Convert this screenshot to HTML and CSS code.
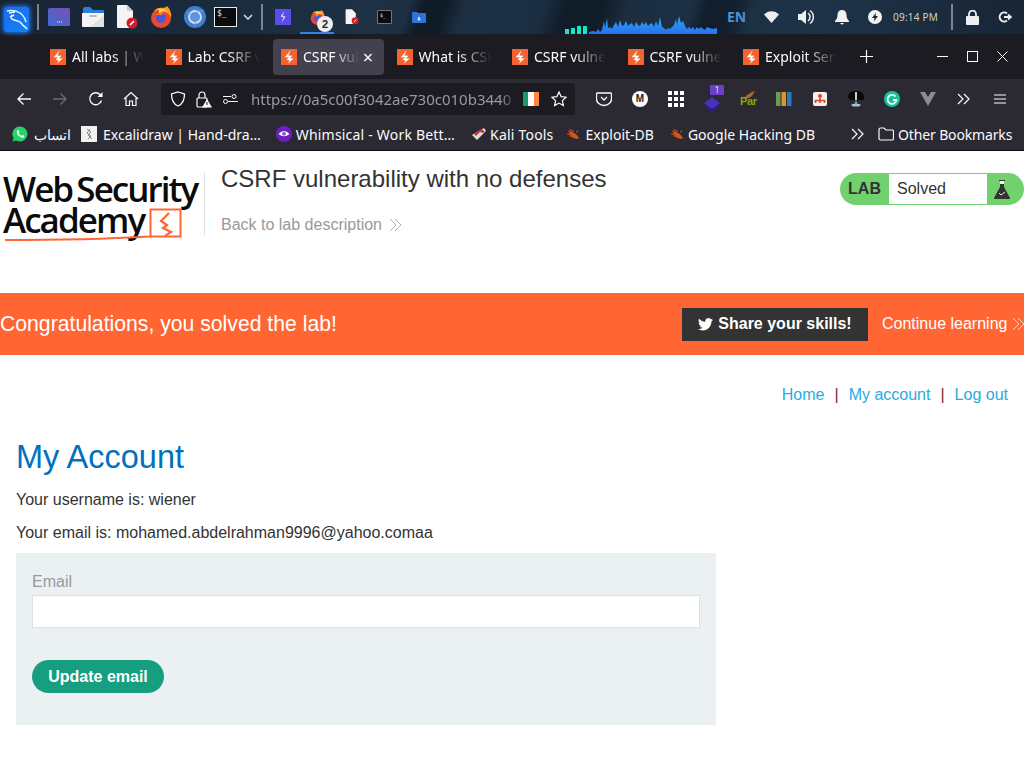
FILE: index.html
```html
<!DOCTYPE html>
<html lang="en">
<head>
<meta charset="utf-8">
<title>CSRF vulnerability with no defenses</title>
<link rel="stylesheet" href="styles.css">
</head>
<body>
<svg class="defs" width="0" height="0" aria-hidden="true">
  <symbol id="bolt" viewBox="0 0 16 16"><rect width="16" height="16" fill="#f4622f"/><path d="M9.800 1 3.800 8.200 8 8.600 5.600 10.800 8.600 11.400 6.600 15 12.600 9.600 8.800 9.200 11.600 6.800 7.400 6.400z" fill="#fff"/></symbol>
  <symbol id="bug" viewBox="0 0 16 16"><path d="M3 4l3 2 5 2 3 4-1 1-5-1-3-3z" fill="#d4541c"/><path d="M2 8l4 1M5 11l2-2M8 4l0 3M11 6l2-1M5 3l2 3" stroke="#d4541c" fill="none"/></symbol>
  <symbol id="fox" viewBox="0 0 22 22"><circle cx="11" cy="12" r="10" fill="#e8492f"/><path d="M4 5c2-3 6-4 9-3 1-1 3 0 4-2 3 3 5 8 4 12-1-3-3-5-5-6-3-2-8-2-12-1z" fill="#ff9b25"/><path d="M9 3c3-1 7 0 9 4-2-1-4-2-6-1-1 1-3 1-3 1z" fill="#ffd13b"/><circle cx="11" cy="12" r="5" fill="#4f56d8"/><path d="M6 9c2-2 5-3 8-2l-3 2z" fill="#ff7a1f"/></symbol>
</svg>

<div class="panel">
  <div class="panel-left">
    <div class="kali"><svg width="26" height="26" viewBox="0 0 26 26"><path d="M3 4c6-1 10 0 13 2 3 2 5 5 6 9M8 8c-2 2-1 4 2 5 3 1 6 1 8 4 1 2 3 2 5 5M5 6l6-1M6 10l4-2" fill="none" stroke="#eaf5ff" stroke-width="1.500"/></svg></div>
    <i class="sep"></i>
    <svg class="ic-a" width="22" height="18" viewBox="0 0 22 18"><defs><linearGradient id="lav" x1="0" y1="1" x2="1" y2="0"><stop offset="0" stop-color="#3f6ad6"/><stop offset="1" stop-color="#7a4fb0"/></linearGradient></defs><rect width="22" height="18" rx="1.500" fill="url(#lav)"/><path d="M9 13.500h1v1H9zM11 13.500h1v1h-1zM13 13.500h1v1h-1z" fill="#fff"/></svg>
    <svg class="ic-b" width="22" height="20" viewBox="0 0 22 20"><path d="M1 2q0-2 2-2h5l3 3h10q1 0 1 1v3H1z" fill="#2d7fd8"/><path d="M0 6h22v13q0 1-1 1H1q-1 0-1-1z" fill="#f4f4f4"/><path d="M22 8v11q0 1-1 1H8z" fill="#e2e2e2"/><rect x="7" y="8" width="8" height="2" rx="1" fill="#bbb"/></svg>
    <svg class="ic-c" width="22" height="24" viewBox="0 0 22 24"><path d="M1 1q0-1 1-1h9l6 6v16q0 1-1 1H2q-1 0-1-1z" fill="#f4f4f4"/><path d="M11 0l6 6h-6z" fill="#ccc"/><circle cx="16" cy="18" r="5.500" fill="#d01f2a"/><path d="M14 20l4-4" stroke="#fff" stroke-width="1.600"/></svg>
    <svg class="ic-d" width="22" height="22"><use href="#fox"/></svg>
    <svg class="ic-e" width="22" height="22" viewBox="0 0 22 22"><circle cx="11" cy="11" r="11" fill="#3f7fd0"/><circle cx="11" cy="11" r="6" fill="#5d93d8" stroke="#cfe0f4" stroke-width="1.800"/><path d="M3 6l5 3M12 5h8M10 20l3-6" stroke="#6fa3e0" stroke-width="1"/></svg>
    <div class="term"><span>$_</span></div>
    <svg class="ic-f" width="10" height="6" viewBox="0 0 10 6"><path d="M1 1l4 4 4-4" fill="none" stroke="#ddd" stroke-width="1.500"/></svg>
    <i class="sep sep-2"></i>
    <svg class="burp" width="16" height="16" viewBox="0 0 16 16"><rect width="16" height="16" fill="#5b4be8"/><path d="M9.500 2 5.500 7.500 8.500 8 6.500 14 10.500 7.500 7.500 7z" fill="#dfe6ff"/></svg>
    <div class="ff-wrap">
      <svg width="15" height="15"><use href="#fox"/></svg>
      <b class="count">2</b>
    </div>
    <svg class="ic-g" width="14" height="16" viewBox="0 0 22 24"><path d="M1 1q0-1 1-1h9l6 6v16q0 1-1 1H2q-1 0-1-1z" fill="#f4f4f4"/><circle cx="16" cy="18" r="5.500" fill="#d01f2a"/><path d="M14 20l4-4" stroke="#fff" stroke-width="1.500"/></svg>
    <div class="term term-small"><span>$_</span></div>
    <svg class="ic-h" width="14" height="11" viewBox="0 0 14 11"><path d="M0 1q0-1 1-1h4l1 1h7q1 0 1 1v8q0 1-1 1H1q-1 0-1-1z" fill="#2d74d8"/><path d="M6 5h2v2h1L7 9 5 7h1z" fill="#cfe0fa"/></svg>
  </div>
  <div class="panel-right">
    <div class="graph"><span class="bars"><i></i><i></i><i></i><i></i></span><svg width="128" height="18" viewBox="0 0 128 18"><defs><linearGradient id="g" x1="0" y1="0" x2="0" y2="1"><stop offset="0" stop-color="#27b0ef"/><stop offset="1" stop-color="#2a6ff0"/></linearGradient></defs><path d="M0 18V16L4 15 7 16 9 13 11 16 13 14 15 5 16 12 18 2 19 12 21 11 23 13 25 9 27 6 29 11 31 4 33 10 35 9 37 5 39 10 41 8 43 7 45 11 47 6 49 9 51 10 53 6 55 9 57 6 59 10 61 8 63 7 65 11 67 5 69 10 71 1 73 11 75 12 77 14 79 12 81 13 83 11 85 9 87 3 88 9 90 0 92 7 94 5 96 10 98 13 100 11 102 13 104 11 106 14 108 11 110 13 112 11 114 13 116 14 118 11 120 12 124 13 128 12V18z" fill="url(#g)"/></svg></div>
    <span class="lang">EN</span>
    <svg class="wifi" width="15" height="12" viewBox="0 0 15 12"><path d="M0 3.500C4-1 11-1 15 3.500L7.500 12z" fill="#eee"/></svg>
    <svg class="vol" width="17" height="16" viewBox="0 0 17 16"><path d="M0 5h3l5-4v14l-5-4H0z" fill="#eee"/><path d="M10 4a5 5 0 0 1 0 8M12 1.500a8 8 0 0 1 0 13" fill="none" stroke="#eee" stroke-width="1.500"/></svg>
    <svg class="bell" width="14" height="15" viewBox="0 0 14 15"><path d="M7 0c3 0 4.500 2 4.500 5 0 3 1 4.500 2.500 6v1H0v-1c1.500-1.500 2.500-3 2.500-6C2.500 2 4 0 7 0z" fill="#f2f2f2"/><path d="M5 13h4q-2 3-4 0z" fill="#f2f2f2"/></svg>
    <svg class="boltc" width="14" height="14" viewBox="0 0 14 14"><circle cx="7" cy="7" r="7" fill="#f2f2f2"/><path d="M8 2.500 4 8h2.500L6 11.500 10 6H7.500z" fill="#1b2838"/></svg>
    <span class="clock">09:14 PM</span>
    <i class="sep sep-3"></i>
    <svg class="lock" width="13" height="15" viewBox="0 0 13 15"><rect y="6" width="13" height="9" rx="1" fill="#eee"/><path d="M3 6.500V4a3.500 3.500 0 0 1 7 0v2.500" fill="none" stroke="#eee" stroke-width="1.800"/></svg>
    <svg class="power" width="14" height="12" viewBox="0 0 14 12"><path d="M9 2.500A4.500 4.500 0 1 0 9 9.500" fill="none" stroke="#eee" stroke-width="2"/><path d="M6 6h6M10 3.500 13 6l-3 2.500" fill="none" stroke="#eee" stroke-width="1.800"/></svg>
  </div>
</div>

<div class="tabs">
  <div class="tab"><svg class="fav"><use href="#bolt"/></svg><span class="tab-t">All labs | Web Security</span></div>
  <div class="tab"><svg class="fav"><use href="#bolt"/></svg><span class="tab-t">Lab: CSRF vuln</span></div>
  <div class="tab active"><svg class="fav"><use href="#bolt"/></svg><span class="tab-t">CSRF vulnerability</span><span class="x">×</span></div>
  <div class="tab"><svg class="fav"><use href="#bolt"/></svg><span class="tab-t">What is CSRF</span></div>
  <div class="tab"><svg class="fav"><use href="#bolt"/></svg><span class="tab-t">CSRF vulnerability</span></div>
  <div class="tab"><svg class="fav"><use href="#bolt"/></svg><span class="tab-t">CSRF vulnerability</span></div>
  <div class="tab"><svg class="fav"><use href="#bolt"/></svg><span class="tab-t">Exploit Server</span></div>
  <svg class="newtab" width="13" height="13" viewBox="0 0 13 13"><path d="M6.500 0v13M0 6.500h13" stroke="#fbfbfe" stroke-width="1.200"/></svg>
  <div class="win">
    <svg width="11" height="11" viewBox="0 0 11 11"><path d="M0 5.500h11" stroke="#fbfbfe"/></svg>
    <svg width="11" height="11" viewBox="0 0 11 11"><rect x=".5" y=".5" width="10" height="10" fill="none" stroke="#fbfbfe"/></svg>
    <svg width="11" height="11" viewBox="0 0 11 11"><path d="M.5.500l10 10M10.500.500l-10 10" stroke="#fbfbfe"/></svg>
  </div>
</div>

<div class="nav">
  <svg width="16" height="16" viewBox="0 0 16 16"><path d="M15 8H2M7.500 2.500 2 8l5.500 5.500" fill="none" stroke="#fbfbfe" stroke-width="1.300"/></svg>
  <svg class="fwd" width="16" height="16" viewBox="0 0 16 16"><path d="M1 8h13M8.500 2.500 14 8l-5.500 5.500" fill="none" stroke="#6d6c74" stroke-width="1.300"/></svg>
  <svg class="reload" width="16" height="16" viewBox="0 0 16 16"><path d="M13.500 9.500A6 6 0 1 1 12 3.500L14 5" fill="none" stroke="#fbfbfe" stroke-width="1.300"/><path d="M14.500 1v5h-5z" fill="#fbfbfe"/></svg>
  <svg class="home" width="16" height="16" viewBox="0 0 16 16"><path d="M1 8 8 1.500 15 8M3 7v7.500h3.500V10h3v4.500H13V7" fill="none" stroke="#fbfbfe" stroke-width="1.200"/></svg>
  <div class="url">
    <svg width="16" height="16" viewBox="0 0 16 16"><path d="M8 1 14.500 3c0 6-1.500 10-6.500 12C3 13 1.500 9 1.500 3z" fill="none" stroke="#fbfbfe" stroke-width="1.300"/></svg>
    <svg class="padlock" width="16" height="17" viewBox="0 0 16 17"><rect x="1" y="7" width="10" height="9" rx="1" fill="none" stroke="#fbfbfe" stroke-width="1.200"/><path d="M3 7V4a3 3 0 0 1 6 0v3" fill="none" stroke="#fbfbfe" stroke-width="1.200"/><path d="M11 8l5 8.500H6z" fill="#fbfbfe"/><path d="M11 11v3" stroke="#1c1b22"/></svg>
    <svg class="perm" width="15" height="10" viewBox="0 0 15 10"><circle cx="11" cy="2.500" r="2" fill="none" stroke="#fbfbfe"/><path d="M0 2.500h8M5 7.500h10" stroke="#fbfbfe"/><circle cx="2.500" cy="7.500" r="2" fill="none" stroke="#fbfbfe"/></svg>
    <span class="url-t">https://0a5c00f3042ae730c010b3440</span>
    <span class="flag"><i></i><i></i><i></i></span>
    <svg class="star" width="16" height="16" viewBox="0 0 16 16"><path d="M8 1l2.100 4.600 5 .6-3.700 3.400 1 5L8 12.100 3.600 14.600l1-5L.9 6.200l5-.6z" fill="none" stroke="#fbfbfe" stroke-width="1.200"/></svg>
  </div>
  <div class="ext">
    <svg width="16" height="16" viewBox="0 0 16 16"><path d="M1.500 2h13q1 0 1 1v5a7.500 6.500 0 0 1-15 0V3q0-1 1-1z" fill="none" stroke="#fbfbfe" stroke-width="1.300"/><path d="M5 6l3 3 3-3" fill="none" stroke="#fbfbfe" stroke-width="1.300"/></svg>
    <span class="ext-m">M</span>
    <svg width="16" height="16" viewBox="0 0 16 16"><g fill="#fff"><rect width="4" height="4"/><rect x="6" width="4" height="4"/><rect x="12" width="4" height="4"/><rect y="6" width="4" height="4"/><rect x="6" y="6" width="4" height="4"/><rect x="12" y="6" width="4" height="4"/><rect y="12" width="4" height="4"/><rect x="6" y="12" width="4" height="4"/><rect x="12" y="12" width="4" height="4"/></g></svg>
    <div class="stack"><svg width="16" height="15" viewBox="0 0 16 15"><path d="M8 3l8 6-8 6-8-6z" fill="#2e1f86"/><path d="M8 0l8 6-8 6-8-6z" fill="#4a33b8"/></svg><b>1</b></div>
    <div class="par"><svg width="16" height="8" viewBox="0 0 16 8"><path d="M3 8l4-4 5-3 3-1-3 5-3 2z" fill="#a3673a"/></svg><span>Par</span></div>
    <svg width="16" height="16" viewBox="0 0 16 16"><rect x="0" y="1" width="4.500" height="14" fill="#6d9a55"/><rect x="5.500" y="1" width="4.500" height="14" fill="#e0932a"/><rect x="11" y="1" width="4.500" height="14" fill="#2c78b8"/></svg>
    <svg width="16" height="16" viewBox="0 0 16 16"><rect x="1" y="1" width="14" height="14" rx="2" fill="#f4f0ec"/><circle cx="8" cy="5" r="2" fill="#d9482a"/><path d="M3.500 12V9.500h9V12M8 7v5" fill="none" stroke="#d9482a" stroke-width="1.600"/></svg>
    <svg width="16" height="16" viewBox="0 0 16 16"><path d="M0 5q1-5 8-5t8 5-4 4H4q-4 0-4-4z" fill="#0a0a0a"/><path d="M8 1v8" stroke="#fff" stroke-width="1.600"/><ellipse cx="8" cy="14" rx="4.500" ry="1.500" fill="#9fc4d8"/><path d="M8 10v3" stroke="#ddd"/></svg>
    <svg width="16" height="16" viewBox="0 0 16 16"><circle cx="8" cy="8" r="8" fill="#15c39a"/><path d="M11.500 5.500A4.500 4.500 0 1 0 12.500 9H9" fill="none" stroke="#fff" stroke-width="1.800"/></svg>
    <svg width="16" height="14" viewBox="0 0 16 14"><path d="M0 0h5l3 5 3-5h5L8 14z" fill="#8b8b90"/></svg>
    <svg class="ext-more" width="14" height="12" viewBox="0 0 14 12"><path d="M1 1l5 5-5 5M7 1l5 5-5 5" fill="none" stroke="#fbfbfe" stroke-width="1.200"/></svg>
    <svg class="menu" width="12" height="10" viewBox="0 0 12 10"><path d="M0 1h12M0 5h12M0 9h12" stroke="#fbfbfe" stroke-width="1.200"/></svg>
  </div>
</div>

<div class="bookmarks">
  <span class="bm bm-wa"><svg width="16" height="16" viewBox="0 0 16 16"><path d="M8 .5A7.500 7.500 0 0 0 1.600 12L.5 15.500 4 14.400A7.500 7.500 0 1 0 8 .5z" fill="#25d366"/><path d="M5 4.500l1.500-.5 1 2-1 1q1 2 3 3l1-1 2 1-.5 1.500q-2 1-5-1.500T5 4.500z" fill="#fff"/></svg><span class="ar">اتساب</span></span>
  <span class="bm bm-ex"><svg width="16" height="16" viewBox="0 0 16 16"><rect width="16" height="16" fill="#f1f1f1"/><path d="M6 3l4 3-3 3 4 4M9 3 6 7l4 3-3 3" fill="none" stroke="#888"/></svg>Excalidraw | Hand-dra…</span>
  <span class="bm bm-wh"><svg width="16" height="16" viewBox="0 0 16 16"><circle cx="8" cy="8" r="8" fill="#6b1fc0"/><path d="M2.500 8Q8 2 13.500 8 8 12.500 2.500 8z" fill="#fff"/><circle cx="8" cy="7.800" r="2" fill="#8b5be0"/></svg>Whimsical - Work Bett…</span>
  <span class="bm bm-ka"><svg width="16" height="16" viewBox="0 0 16 16"><path d="M1 9 13 2l2 3-9 9z" fill="#ddd"/><path d="M3 8l8-5 3 3-2 1-3-1-4 4z" fill="#c8343a"/></svg>Kali Tools</span>
  <span class="bm bm-db"><svg width="16" height="16"><use href="#bug"/></svg>Exploit-DB</span>
  <span class="bm bm-gh"><svg width="16" height="16"><use href="#bug"/></svg>Google Hacking DB</span>
  <svg class="bm-more" width="13" height="12" viewBox="0 0 13 12"><path d="M1 1l5 5-5 5M7 1l5 5-5 5" fill="none" stroke="#fbfbfe" stroke-width="1.200"/></svg>
  <span class="bm bm-ot"><svg width="16" height="14" viewBox="0 0 16 14"><path d="M1 2.500q0-1.500 1.500-1.500h3.500l2 2h6q1.500 0 1.500 1.500v7q0 1.500-1.500 1.500h-11Q1 13 1 11.500z" fill="none" stroke="#fbfbfe" stroke-width="1.200"/></svg>Other Bookmarks</span>
</div>

<div class="page">
  <header class="lab-head">
    <div class="logo">
      <span class="logo-1">Web Security</span>
      <span class="logo-2">Academy</span>
      <svg class="logo-art" width="200" height="40" viewBox="0 0 200 40"><path d="M1 32c48 0 100-1 146-3.500h24M146.500 29V1.500h30V28.500H160" fill="none" stroke="#ff6633" stroke-width="2"/><path d="M165 5l-8 8 6 4-4 3 8 4-6 4" fill="none" stroke="#ff6633" stroke-width="2.200"/></svg>
    </div>
    <div class="lab-title">
      <h2>CSRF vulnerability with no defenses</h2>
      <a class="back-link">Back to lab description <svg width="13" height="14" viewBox="0 0 13 14"><path d="M1 1l6 6-6 6M6 1l6 6-6 6" fill="none" stroke="#b3b3b3"/></svg></a>
    </div>
    <div class="status">
      <span class="st-lab">LAB</span>
      <span class="st-val">Solved</span>
      <span class="st-ic"><svg width="16" height="24" viewBox="0 0 16 24"><path d="M5 3h6v1h-1v6l6 11q0 1-1 1H1q-1 0-1-1l6-11V4H5z" fill="#333"/><path d="M6 4h4v3H6z" fill="#f5f5f5"/><path d="M5 16l2 2 4-3" fill="none" stroke="#eee"/></svg></span>
    </div>
  </header>

  <section class="banner">
    <span class="congrats">Congratulations, you solved the lab!</span>
    <a class="share"><svg width="15" height="13" viewBox="0 0 24 20"><path d="M24 2.400a10 10 0 0 1-2.800.8A5 5 0 0 0 23.300.4a10 10 0 0 1-3.100 1.200A4.900 4.900 0 0 0 11.700 6 14 14 0 0 1 1.700.9a4.900 4.900 0 0 0 1.500 6.600 5 5 0 0 1-2.200-.6 4.900 4.900 0 0 0 3.900 4.900 5 5 0 0 1-2.200.1 4.900 4.900 0 0 0 4.600 3.400A9.900 9.900 0 0 1 0 17.300 14 14 0 0 0 7.500 19.500c9 0 14.300-7.700 14-14.500a10 10 0 0 0 2.500-2.600z" fill="#fff"/></svg>Share your skills!</a>
    <a class="continue">Continue learning <svg width="13" height="14" viewBox="0 0 13 14"><path d="M1 1l6 6-6 6M6 1l6 6-6 6" fill="none" stroke="#ffd9cc"/></svg></a>
  </section>

  <nav class="links"><a>Home</a><span>|</span><a>My account</a><span>|</span><a>Log out</a></nav>

  <main class="account">
    <h1>My Account</h1>
    <p>Your username is: wiener</p>
    <p>Your email is: mohamed.abdelrahman9996@yahoo.comaa</p>
    <form class="form">
      <label for="email">Email</label>
      <input id="email" type="text">
      <button type="button">Update email</button>
    </form>
  </main>
</div>
</body>
</html>
```
FILE: styles.css
```css
* { box-sizing: border-box; }
html, body { margin: 0; padding: 0; height: 768px; overflow: hidden; background: #fff; }
body { font-family: "Liberation Sans", Arial, sans-serif; font-size: 16px; color: #333; }
.defs { position: absolute; }
svg { display: block; flex: none; }

.panel { height: 34px; display: flex; justify-content: space-between; background: linear-gradient(108deg, transparent 0 390px, #101b28 405px 425px, transparent 445px 520px, #111c29 540px 575px, transparent 600px 660px, #121e2c 675px 700px, transparent 720px), linear-gradient(90deg, #172434 0%, #1d3044 35%, #1b2d40 60%, #1e3348 80%, #182636 100%); }
.panel-left, .panel-right { display: flex; align-items: center; }
.kali { width: 25px; height: 25px; margin: 4px 0 0 4px; background: linear-gradient(135deg, #1a6ef0, #1480f5); border-radius: 3px; box-shadow: 0 0 5px 1px #1f7dff; overflow: hidden; }
.sep { width: 2px; height: 26px; background: #7d858d; display: block; margin: 0 0 0 8px; }
.ic-a { margin-left: 9px; }
.ic-b { margin-left: 12px; }
.ic-c { margin-left: 12px; }
.ic-d { margin-left: 12px; }
.ic-e { margin-left: 12px; }
.term { width: 23px; height: 20px; margin-left: 8px; background: #0b0b0d; border: 1px solid #e8e8e8; color: #eee; font: 8px/12px "DejaVu Sans Mono", monospace; padding-left: 2px; }
.ic-f { margin-left: 6px; }
.sep-2 { margin-left: 8px; }
.burp { margin-left: 12px; }
.ff-wrap { position: relative; width: 34px; height: 34px; margin-left: 9px; padding: 10px 0 0 10px; border-bottom: 2px solid #3584e4; }
.count { position: absolute; left: 17px; top: 16px; width: 16px; height: 16px; border-radius: 50%; background: #eee; color: #222; font: bold 11px/16px "Liberation Sans", sans-serif; text-align: center; }
.ic-g { margin-left: 11px; }
.term-small { width: 15px; height: 14px; margin-left: 18px; border-color: #777; border-radius: 1px; font-size: 5px; line-height: 8px; }
.ic-h { margin-left: 20px; }

.panel-right { padding-right: 12px; }
.graph { display: flex; align-items: flex-end; height: 34px; margin-right: 10px; }
.bars { display: flex; align-items: flex-end; gap: 2px; margin-right: 2px; }
.bars i { display: block; width: 4px; height: 8px; background: #12e8c8; }
.bars i:nth-child(1) { height: 5px; }
.bars i:nth-child(2) { height: 6px; }
.lang { font: bold 14px/1 "Noto Sans", sans-serif; color: #4a92d6; margin-right: 18px; }
.wifi { margin-right: 19px; }
.vol { margin-right: 20px; }
.bell { margin-right: 19px; }
.boltc { margin-right: 11px; }
.clock { font: 10px/1 "Noto Sans", sans-serif; color: #d8d2b8; margin-right: 13px; letter-spacing: .2px; }
.sep-3 { margin: 0 13px 0 0; }
.lock { margin-right: 19px; }

.tabs { height: 45px; background: #1c1b22; display: flex; align-items: center; padding-left: 42px; }
.tab { width: 115.5px; height: 36px; display: flex; align-items: center; padding-left: 8px; color: #fbfbfe; font: 14px "Noto Sans", sans-serif; border-radius: 4px; flex: none; position: relative; }
.tab.active { background: #42414d; width: 111px; margin-right: 4.5px; }
.fav { width: 16px; height: 16px; margin-right: 6px; flex: none; }
.tab-t { width: 72px; overflow: hidden; white-space: nowrap; -webkit-mask-image: linear-gradient(90deg, #000 55%, transparent 100%); mask-image: linear-gradient(90deg, #000 55%, transparent 100%); }
.active .tab-t { width: 56px; }
.x { position: absolute; right: 11px; font-size: 18px; color: #fbfbfe; line-height: 1; }
.newtab { margin-left: 9px; }
.win { display: flex; gap: 19px; margin-left: auto; padding-right: 16px; }

.nav { height: 37px; background: #2b2a33; display: flex; align-items: center; padding: 4px 0 1px 16px; }
.fwd { margin-left: 20px; }
.reload { margin-left: 20px; }
.home { margin-left: 19px; }
.url { width: 414px; height: 32px; margin-left: 22px; background: #1c1b22; border-radius: 4px; display: flex; align-items: center; padding-left: 9px; }
.padlock { margin-left: 10px; }
.perm { margin-left: 11px; }
.url-t { font: 15px "Noto Sans", sans-serif; color: #9a99a0; margin-left: 13px; width: 266px; overflow: hidden; white-space: nowrap; -webkit-mask-image: linear-gradient(90deg, #000 94%, transparent 100%); mask-image: linear-gradient(90deg, #000 94%, transparent 100%); }
.flag { display: flex; width: 16px; height: 14px; margin-left: 6px; }
.flag i { flex: 1; }
.flag i:nth-child(1) { background: #169b62; }
.flag i:nth-child(2) { background: #fff; }
.flag i:nth-child(3) { background: #ff883e; }
.star { margin-left: 12px; }
.ext { display: flex; align-items: center; gap: 20px; margin-left: 21px; }
.ext-m { width: 16px; height: 16px; border-radius: 50%; background: #fff; color: #222; font: bold 10px/16px "Liberation Sans", sans-serif; text-align: center; flex: none; }
.stack { position: relative; width: 16px; height: 16px; flex: none; }
.stack svg { margin-top: 6px; }
.stack b { position: absolute; left: 6px; top: -6px; width: 14px; height: 10px; background: #6a40c8; color: #ddd; font: 400 9px/10px "Noto Sans", sans-serif; text-align: center; border-radius: 1px; }
.par { width: 16px; height: 16px; flex: none; }
.par span { display: block; margin-top: -3px; font: bold 11px/11px "Liberation Sans", sans-serif; letter-spacing: -.3px; color: #8aa800; }
.ext-more { margin-left: 1px; }
.menu { margin-left: 3px; }

.bookmarks { height: 35px; background: #2b2a33; border-bottom: 1px solid #0c0c0d; display: flex; align-items: center; padding: 2px 0 0 12px; color: #fbfbfe; font: 14px "Noto Sans", sans-serif; white-space: nowrap; }
.bm { display: flex; align-items: center; gap: 6px; }
.bm-ex { margin-left: 10px; }
.bm-wh { margin-left: 15px; gap: 4px; letter-spacing: .2px; }
.bm-ka { margin-left: 16px; gap: 3px; letter-spacing: .2px; }
.bm-db { margin-left: 11px; gap: 5px; }
.bm-gh { margin-left: 15px; gap: 3px; }
.bm-more { margin-left: 36px; }
.bm-ot { margin-left: 14px; gap: 4px; letter-spacing: -.15px; }

.lab-head { height: 142px; display: flex; align-items: flex-start; padding-top: 21px; }
.logo { width: 200px; height: 64px; margin-left: 4px; position: relative; color: #0b0b0b; white-space: nowrap; font-family: "Open Sans", sans-serif; font-weight: 600; }
.logo-1, .logo-2 { display: block; font-size: 35px; line-height: 30px; letter-spacing: -1.95px; word-spacing: -3px; margin-left: -1px; }
.logo-1 { margin-top: 2px; }
.logo-2 { margin-top: 1px; }
.logo-art { position: absolute; left: 0; top: 36px; }
.lab-title { padding: 0 0 0 16px; border-left: 1px solid #e0e0e0; height: 64px; }
.lab-title h2 { margin: -7px 0 0; font-size: 24px; line-height: 28px; font-weight: 400; color: #333; }
.back-link { display: flex; align-items: center; gap: 7px; margin-top: 23px; color: #999; }
.status { margin-left: auto; display: flex; height: 32px; width: 184px; background: #70d16d; border-radius: 16px; margin-top: 1px; align-items: stretch; padding: 1px 0; }
.st-lab { width: 49px; font-weight: 700; color: #333; text-align: center; line-height: 30px; }
.st-val { width: 98px; background: #fff; color: #333; padding-left: 8px; line-height: 29px; }
.st-ic { flex: 1; display: flex; align-items: center; padding-left: 7px; }

.banner { height: 62px; background: #ff6633; color: #fff; display: flex; align-items: center; font-size: 21.2px; }
.share { display: flex; align-items: center; justify-content: center; gap: 5px; width: 186px; height: 33px; margin-left: auto; background: #333; color: #fff; font-size: 16px; font-weight: 700; }
.continue { display: flex; align-items: center; gap: 5px; margin-left: 14px; width: 142px; font-size: 16px; white-space: nowrap; }

.links { display: flex; justify-content: flex-end; gap: 10px; padding: 31px 16px 0 0; line-height: 18px; color: #7a2a2a; }
.links a { color: #29abe2; }
.account { padding: 0 16px; }
.account h1 { margin: 35px 0 0; font-size: 32.5px; line-height: 37px; font-weight: 400; color: #0071bc; }
.account p { margin: 14px 0 0; line-height: 19px; }
.form { width: 700px; height: 172px; margin-top: 11px; background: #ebf0f2; padding: 19px 16px 0; }
.form label { display: block; color: #999; line-height: 19px; }
.form input { display: block; width: 100%; height: 33px; margin-top: 4px; border: 1px solid #e0e0e0; background: #fff; }
.form button { display: block; margin-top: 32px; width: 132px; height: 33px; border: 0; border-radius: 17px; background: #169e80; color: #fff; font: 700 16px "Liberation Sans", sans-serif; }
```
